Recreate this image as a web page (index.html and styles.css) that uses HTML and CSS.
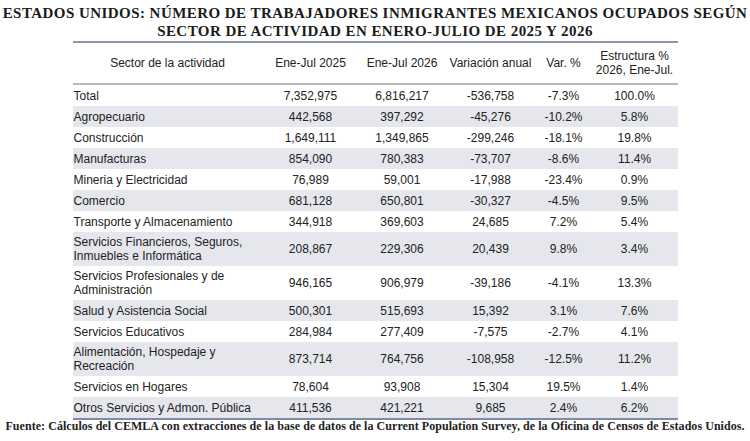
FILE: index.html
```html
<!DOCTYPE html>
<html lang="es">
<head>
  <meta charset="UTF-8">
  <meta name="viewport" content="width=device-width, initial-scale=1.0">
  <title>Trabajadores inmigrantes mexicanos por sector</title>
  <link rel="stylesheet" href="styles.css">
</head>
<body>
  <h1 class="title">ESTADOS UNIDOS: NÚMERO DE TRABAJADORES INMIGRANTES MEXICANOS OCUPADOS SEGÚN<br>SECTOR DE ACTIVIDAD EN ENERO-JULIO DE 2025 Y 2026</h1>

  <table class="data-table">
    <thead>
      <tr>
        <th class="col-sector">Sector de la actividad</th>
        <th class="col-a">Ene-Jul 2025</th>
        <th class="col-b">Ene-Jul 2026</th>
        <th class="col-c">Variación anual</th>
        <th class="col-d">Var. %</th>
        <th class="col-e">Estructura %<br>2026, Ene-Jul.</th>
      </tr>
    </thead>
    <tbody>
      <tr><td>Total</td><td>7,352,975</td><td>6,816,217</td><td>-536,758</td><td>-7.3%</td><td>100.0%</td></tr>
      <tr class="shade"><td>Agropecuario</td><td>442,568</td><td>397,292</td><td>-45,276</td><td>-10.2%</td><td>5.8%</td></tr>
      <tr><td>Construcción</td><td>1,649,111</td><td>1,349,865</td><td>-299,246</td><td>-18.1%</td><td>19.8%</td></tr>
      <tr class="shade"><td>Manufacturas</td><td>854,090</td><td>780,383</td><td>-73,707</td><td>-8.6%</td><td>11.4%</td></tr>
      <tr><td>Mineria y Electricidad</td><td>76,989</td><td>59,001</td><td>-17,988</td><td>-23.4%</td><td>0.9%</td></tr>
      <tr class="shade"><td>Comercio</td><td>681,128</td><td>650,801</td><td>-30,327</td><td>-4.5%</td><td>9.5%</td></tr>
      <tr><td>Transporte y Almacenamiento</td><td>344,918</td><td>369,603</td><td>24,685</td><td>7.2%</td><td>5.4%</td></tr>
      <tr class="shade tall"><td>Servicios Financieros, Seguros,<br>Inmuebles e Informática</td><td>208,867</td><td>229,306</td><td>20,439</td><td>9.8%</td><td>3.4%</td></tr>
      <tr class="tall"><td>Servicios Profesionales y de<br>Administración</td><td>946,165</td><td>906,979</td><td>-39,186</td><td>-4.1%</td><td>13.3%</td></tr>
      <tr class="shade"><td>Salud y Asistencia Social</td><td>500,301</td><td>515,693</td><td>15,392</td><td>3.1%</td><td>7.6%</td></tr>
      <tr><td>Servicios Educativos</td><td>284,984</td><td>277,409</td><td>-7,575</td><td>-2.7%</td><td>4.1%</td></tr>
      <tr class="shade tall"><td>Alimentación, Hospedaje y<br>Recreación</td><td>873,714</td><td>764,756</td><td>-108,958</td><td>-12.5%</td><td>11.2%</td></tr>
      <tr><td>Servicios en Hogares</td><td>78,604</td><td>93,908</td><td>15,304</td><td>19.5%</td><td>1.4%</td></tr>
      <tr class="shade"><td>Otros Servicios y Admon. Pública</td><td>411,536</td><td>421,221</td><td>9,685</td><td>2.4%</td><td>6.2%</td></tr>
    </tbody>
  </table>

  <p class="source">Fuente: Cálculos del CEMLA con extracciones de la base de datos de la Current Population Survey, de la Oficina de Censos de Estados Unidos.</p>
</body>
</html>
```

FILE: styles.css
```css
body {
  margin: 0;
  padding: 0;
  background: #ffffff;
  color: #1c1c1c;
}

.title {
  margin: 4px 0 0;
  font-family: "Liberation Serif", "DejaVu Serif", serif;
  font-size: 15px;
  font-weight: bold;
  line-height: 18px;
  letter-spacing: 0.45px;
  text-align: center;
  white-space: nowrap;
  color: #1a1a1a;
}

.data-table {
  width: 605px;
  margin: 1px auto 0;
  border-collapse: collapse;
  font-family: "Liberation Sans", Arial, Helvetica, sans-serif;
  font-size: 12px;
  color: #222222;
  border-top: 2px solid #8d96ad;
  border-bottom: 2px solid #7f8aa6;
}

.data-table th {
  height: 40px;
  padding: 0;
  font-weight: normal;
  line-height: 14px;
  text-align: center;
  border-bottom: 2px solid #b9b9b9;
}

.data-table td {
  height: 21px;
  padding: 0;
  line-height: 14px;
  text-align: center;
  white-space: nowrap;
}

.data-table td:first-child {
  text-align: left;
  padding-left: 1px;
}

.data-table tr.tall td {
  height: 34px;
}

.data-table tr.shade td {
  background: #e5e7ed;
}

.col-sector { width: 190px; }
.col-a { width: 96px; }
.col-b { width: 87px; }
.col-c { width: 90px; }
.col-d { width: 56px; }
.col-e { width: 86px; }

.source {
  margin: 0;
  font-family: "Liberation Serif", "DejaVu Serif", serif;
  font-size: 12px;
  font-weight: bold;
  line-height: 13px;
  letter-spacing: 0.05px;
  text-align: center;
  white-space: nowrap;
  color: #1e1e1e;
}
```
